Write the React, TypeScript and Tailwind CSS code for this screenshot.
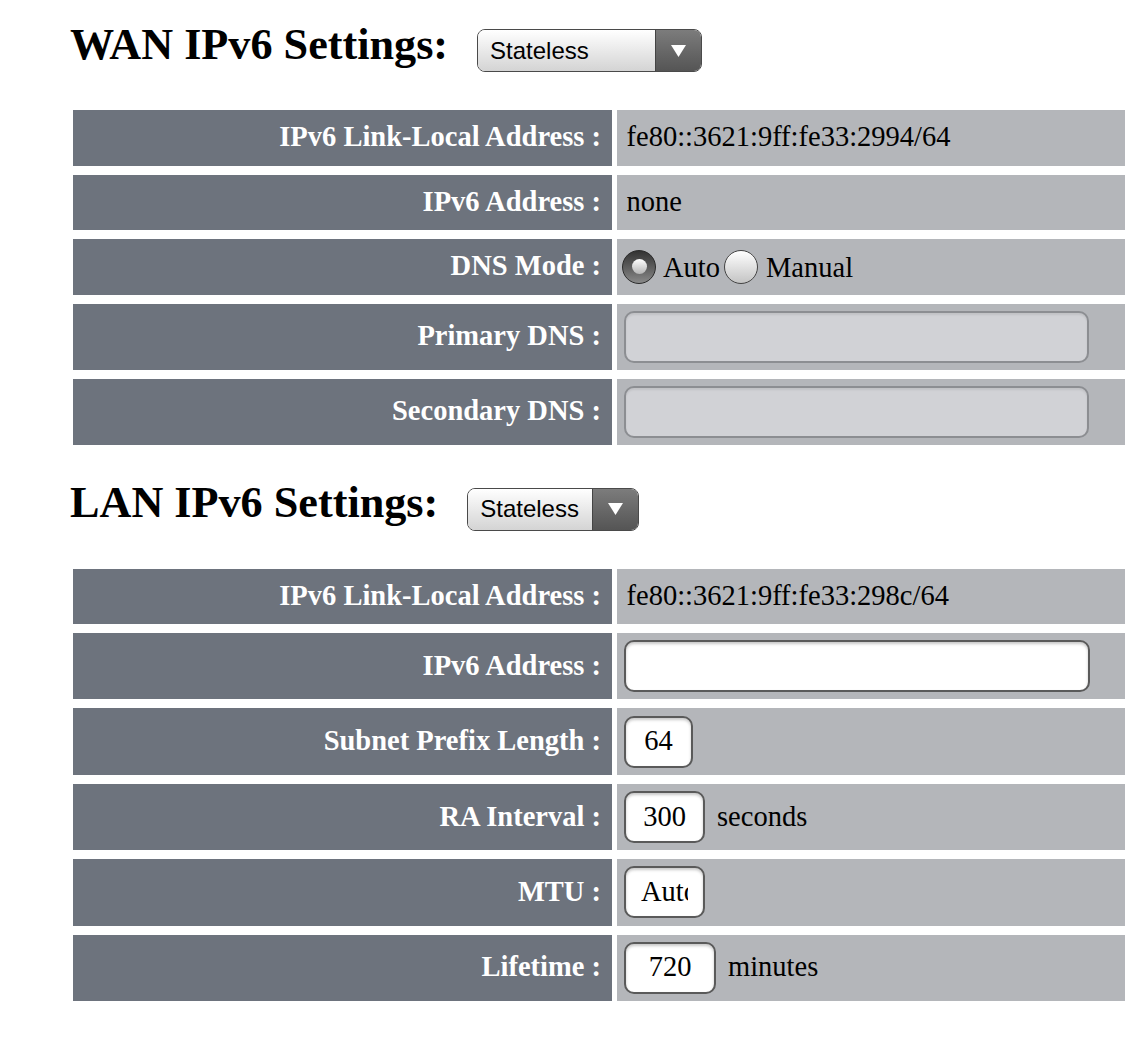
import type { ReactNode } from 'react'

const serif = "font-['Liberation_Serif','Times_New_Roman',serif]"

function Select({ width }: { width: string }) {
  return (
    <div
      className={`inline-flex h-[43px] ${width} rounded-[8px] border-[1.5px] border-[#4a4a4a] overflow-hidden font-['Liberation_Sans',Arial,sans-serif] text-[24px] text-black`}
    >
      <div className="flex-1 flex items-center pl-[12px] bg-linear-to-b from-white to-[#d4d4d4]">Stateless</div>
      <div className="w-[46px] shrink-0 flex items-center justify-center border-l-[1.5px] border-[#444] bg-linear-to-b from-[#7c7c7c] to-[#555]">
        <svg width="15" height="12" viewBox="0 0 15 12">
          <path d="M0 0 H15 L7.5 12 Z" fill="#fff" />
        </svg>
      </div>
    </div>
  )
}

function Heading({ title, width }: { title: string; width: string }) {
  return (
    <div className="flex items-baseline pl-[70px]">
      <h2 className={`${serif} font-bold text-[44.2px] leading-none text-black`}>{title}</h2>
      <div className="ml-[29px]">
        <Select width={width} />
      </div>
    </div>
  )
}

function Row({ label, height, children }: { label: string; height: string; children?: ReactNode }) {
  return (
    <div className={`flex gap-[4.5px] ${height}`}>
      <div className="w-[539px] shrink-0 bg-[#6d737d] flex items-center justify-end pr-[11px] text-white font-bold">
        {label}
      </div>
      <div className="flex-1 bg-[#b4b6ba] flex items-center text-black">{children}</div>
    </div>
  )
}

function Field({ width, value, disabled }: { width: string; value?: string; disabled?: boolean }) {
  return (
    <div
      className={`${width} h-[52px] ml-[7.5px] shrink-0 rounded-[10px] border-2 px-[15px] flex items-center ${
        disabled
          ? 'border-[#8c8e92] bg-[#d1d2d6] shadow-[inset_0_2px_2px_rgba(0,0,0,0.08)]'
          : 'border-[#5a5a5a] bg-white shadow-[inset_0_2px_3px_rgba(0,0,0,0.22)]'
      }`}
    >
      <div className="w-full overflow-hidden whitespace-nowrap text-center">{value}</div>
    </div>
  )
}

function Radio({ checked }: { checked?: boolean }) {
  if (checked) {
    return (
      <span className="w-[34px] h-[34px] shrink-0 rounded-full border border-[#2a2a2a] bg-linear-to-b from-[#333] to-[#8a8a8a] flex items-center justify-center">
        <span className="w-[15px] h-[15px] rounded-full bg-linear-to-b from-white to-[#b5b5b5]" />
      </span>
    )
  }
  return (
    <span className="w-[34px] h-[34px] shrink-0 rounded-full border-[1.5px] border-[#444] bg-linear-to-b from-white to-[#c4c4c4]" />
  )
}

export default function App() {
  return (
    <div className={`w-[1125px] h-[1052px] overflow-hidden bg-white ${serif} text-[28.5px] pt-[22.5px]`}>
      <Heading title="WAN IPv6 Settings:" width="w-[225px]" />

      <div className="ml-[73px] mt-[38px] flex flex-col gap-[9px]">
        <Row label="IPv6 Link-Local Address :" height="h-[55.5px]">
          <span className="ml-[10px]">fe80::3621:9ff:fe33:2994/64</span>
        </Row>
        <Row label="IPv6 Address :" height="h-[55.5px]">
          <span className="ml-[10px]">none</span>
        </Row>
        <Row label="DNS Mode :" height="h-[55.5px]">
          <span className="ml-[5.5px] flex items-center">
            <Radio checked />
            <span className="ml-[7px] translate-y-[2px]">Auto</span>
            <span className="ml-[4px] flex">
              <Radio />
            </span>
            <span className="ml-[8px] translate-y-[2px]">Manual</span>
          </span>
        </Row>
        <Row label="Primary DNS :" height="h-[66px]">
          <Field width="w-[465px]" disabled />
        </Row>
        <Row label="Secondary DNS :" height="h-[66px]">
          <Field width="w-[465px]" disabled />
        </Row>
      </div>

      <div className="mt-[36.5px]">
        <Heading title="LAN IPv6 Settings:" width="w-[172px]" />
      </div>

      <div className="ml-[73px] mt-[38.5px] flex flex-col gap-[9px]">
        <Row label="IPv6 Link-Local Address :" height="h-[55px]">
          <span className="ml-[10px]">fe80::3621:9ff:fe33:298c/64</span>
        </Row>
        <Row label="IPv6 Address :" height="h-[66.4px]">
          <Field width="w-[466px]" />
        </Row>
        <Row label="Subnet Prefix Length :" height="h-[66.4px]">
          <Field width="w-[69px]" value="64" />
        </Row>
        <Row label="RA Interval :" height="h-[66.4px]">
          <Field width="w-[81px]" value="300" />
          <span className="ml-[12px]">seconds</span>
        </Row>
        <Row label="MTU :" height="h-[66.4px]">
          <Field width="w-[81px]" value="Auto" />
        </Row>
        <Row label="Lifetime :" height="h-[66.4px]">
          <Field width="w-[92px]" value="720" />
          <span className="ml-[12px]">minutes</span>
        </Row>
      </div>
    </div>
  )
}
